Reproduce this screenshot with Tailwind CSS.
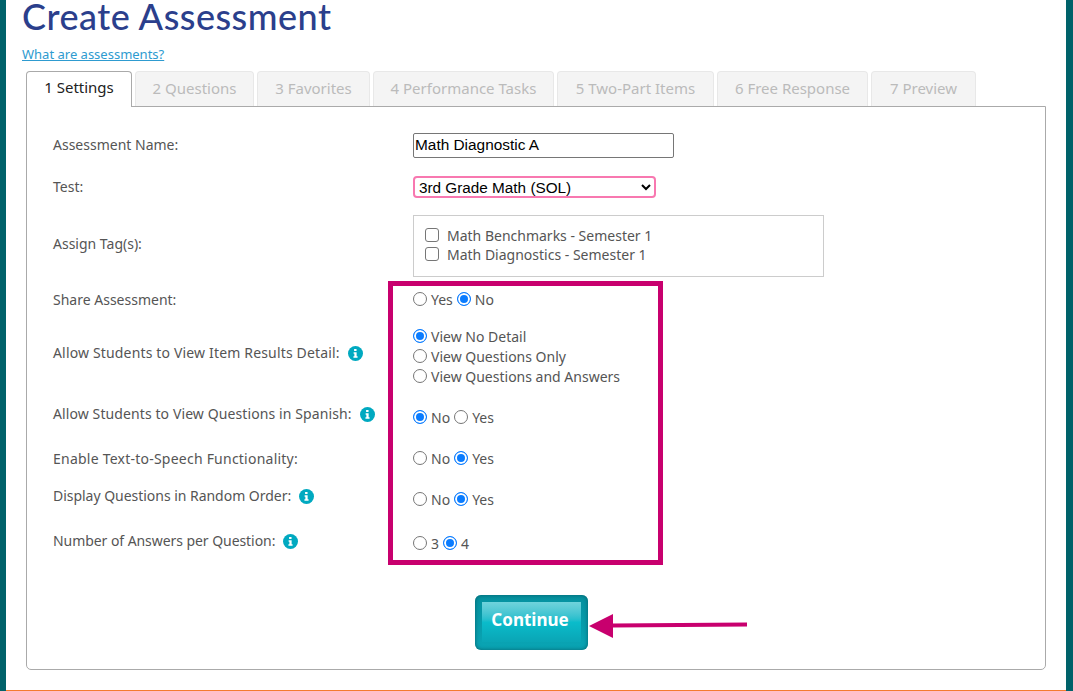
<!DOCTYPE html>
<html lang="en">
<head>
    <meta charset="UTF-8">
    <title>Create Assessment</title>
    <script src="https://cdn.jsdelivr.net/npm/@tailwindcss/browser@4"></script>
</head>
<body class="bg-white h-[691px] overflow-hidden font-['Noto_Sans',sans-serif] text-[14px] leading-[20px] text-[#555]">
    <div class="relative h-[691px] border-l-[6px] border-r-[7px] border-[#00626a]">
        <div class="h-[690px] pl-[16px] pr-[20px]">
            <h1 class="h-[44px] font-['Lato',sans-serif] text-[36px] tracking-[0.5px] leading-[32px] font-medium text-[#2b3f8c]">Create Assessment</h1>
            <a href="#" class="block h-[27px] text-[13px] text-[#2e9bd0] underline">What are assessments?</a>

            <div class="flex pl-[4px] h-[36px] gap-[3px] relative z-10">
                <div class="w-[106px] h-[36px] pb-[5px] flex items-center justify-center bg-white border border-b-0 border-[#aaa] rounded-t-[4px] text-[#222] text-[15px]">1 Settings</div>
                <div class="w-[119px] h-[35px] pb-[3px] flex items-center justify-center bg-[#f4f4f4] border border-b-0 border-[#e8e8e8] rounded-t-[4px] text-[#bbb] text-[15px]">2 Questions</div>
                <div class="w-[113px] h-[35px] pb-[3px] flex items-center justify-center bg-[#f4f4f4] border border-b-0 border-[#e8e8e8] rounded-t-[4px] text-[#bbb] text-[15px]">3 Favorites</div>
                <div class="w-[181px] h-[35px] pb-[3px] flex items-center justify-center bg-[#f4f4f4] border border-b-0 border-[#e8e8e8] rounded-t-[4px] text-[#bbb] text-[15px]">4 Performance Tasks</div>
                <div class="w-[157px] h-[35px] pb-[3px] flex items-center justify-center bg-[#f4f4f4] border border-b-0 border-[#e8e8e8] rounded-t-[4px] text-[#bbb] text-[15px]">5 Two-Part Items</div>
                <div class="w-[151px] h-[35px] pb-[3px] flex items-center justify-center bg-[#f4f4f4] border border-b-0 border-[#e8e8e8] rounded-t-[4px] text-[#bbb] text-[15px]">6 Free Response</div>
                <div class="w-[105px] h-[35px] pb-[3px] flex items-center justify-center bg-[#f4f4f4] border border-b-0 border-[#e8e8e8] rounded-t-[4px] text-[#bbb] text-[15px]">7 Preview</div>
            </div>

            <div class="ml-[4px] -mt-[1px] w-[1020px] h-[564px] border border-[#aaa] rounded-b-[5px] pt-[17px] pl-[26px]">
                <div class="flex items-center h-[42px]">
                    <div class="w-[360px]">Assessment Name:</div>
                    <input type="text" value="Math Diagnostic A" class="w-[261px] h-[25px] px-[1px] border border-[#767676] rounded-[2px] bg-white text-black text-[15.4px] font-['Liberation_Sans',sans-serif]">
                </div>
                <div class="flex items-center h-[42px]">
                    <div class="w-[360px]">Test:</div>
                    <select class="w-[243px] h-[22px] border-2 border-[#f878b0] rounded-[4px] bg-white text-black text-[15.3px] font-['Liberation_Sans',sans-serif]">
                        <option>3rd Grade Math (SOL)</option>
                    </select>
                </div>
                <div class="flex items-center h-[72px]">
                    <div class="w-[360px]">Assign Tag(s):</div>
                    <div class="w-[411px] h-[62px] mt-[4px] border border-[#ccc] pt-[10px] pl-[11px]">
                        <label class="flex items-center h-[19px] gap-[8px]"><input type="checkbox" class="appearance-none w-[14px] h-[14px] -mt-[2px] rounded-[3px] border border-[#767676] bg-white">Math Benchmarks - Semester 1</label>
                        <label class="flex items-center h-[19px] gap-[8px]"><input type="checkbox" class="appearance-none w-[14px] h-[14px] -mt-[2px] rounded-[3px] border border-[#767676] bg-white">Math Diagnostics - Semester 1</label>
                    </div>
                </div>
                <div class="flex items-center h-[40px]">
                    <div class="w-[360px]">Share Assessment:</div>
                    <div class="flex items-center gap-[4px]">
                        <input type="radio" name="share" class="appearance-none w-[14px] h-[14px] -mt-[2px] rounded-full border border-[#767676] bg-white checked:border-[#0a7cff] checked:bg-[#0a7cff] checked:shadow-[inset_0_0_0_2px_white]">Yes
                        <input type="radio" name="share" checked class="appearance-none w-[14px] h-[14px] -mt-[2px] rounded-full border border-[#767676] bg-white checked:border-[#0a7cff] checked:bg-[#0a7cff] checked:shadow-[inset_0_0_0_2px_white]">No
                    </div>
                </div>
                <div class="flex items-start h-[72px]">
                    <div class="w-[360px] mt-[23px] flex items-center gap-[8px]"><span class="tracking-[0.16px]">Allow Students to View Item Results Detail:</span>
                        <svg class="w-[15px] h-[15px]" viewBox="0 0 16 16"><circle cx="8" cy="8" r="8" fill="#00a9c0"/><path d="M6.5 3.2h2.6v2H6.5zM6 6.6h3.2v4.4h1v1.6H5.8V11h1V8.2H6z" fill="#fff"/></svg>
                    </div>
                    <div class="mt-[7px]">
                        <label class="flex items-center h-[20px] gap-[4px]"><input type="radio" name="detail" checked class="appearance-none w-[14px] h-[14px] -mt-[2px] rounded-full border border-[#767676] bg-white checked:border-[#0a7cff] checked:bg-[#0a7cff] checked:shadow-[inset_0_0_0_2px_white]">View No Detail</label>
                        <label class="flex items-center h-[20px] gap-[4px]"><input type="radio" name="detail" class="appearance-none w-[14px] h-[14px] -mt-[2px] rounded-full border border-[#767676] bg-white checked:border-[#0a7cff] checked:bg-[#0a7cff] checked:shadow-[inset_0_0_0_2px_white]">View Questions Only</label>
                        <label class="flex items-center h-[20px] gap-[4px]"><input type="radio" name="detail" class="appearance-none w-[14px] h-[14px] -mt-[2px] rounded-full border border-[#767676] bg-white checked:border-[#0a7cff] checked:bg-[#0a7cff] checked:shadow-[inset_0_0_0_2px_white]">View Questions and Answers</label>
                    </div>
                </div>
                <div class="flex items-start h-[46px]">
                    <div class="w-[360px] mt-[12px] flex items-center gap-[8px]"><span class="tracking-[0.1px]">Allow Students to View Questions in Spanish:</span>
                        <svg class="w-[15px] h-[15px]" viewBox="0 0 16 16"><circle cx="8" cy="8" r="8" fill="#00a9c0"/><path d="M6.5 3.2h2.6v2H6.5zM6 6.6h3.2v4.4h1v1.6H5.8V11h1V8.2H6z" fill="#fff"/></svg>
                    </div>
                    <div class="mt-[16px] flex items-center gap-[4px]">
                        <input type="radio" name="spanish" checked class="appearance-none w-[14px] h-[14px] -mt-[2px] rounded-full border border-[#767676] bg-white checked:border-[#0a7cff] checked:bg-[#0a7cff] checked:shadow-[inset_0_0_0_2px_white]">No
                        <input type="radio" name="spanish" class="appearance-none w-[14px] h-[14px] -mt-[2px] rounded-full border border-[#767676] bg-white checked:border-[#0a7cff] checked:bg-[#0a7cff] checked:shadow-[inset_0_0_0_2px_white]">Yes
                    </div>
                </div>
                <div class="flex items-center h-[42px]">
                    <div class="w-[360px]"><span class="tracking-[0.23px]">Enable Text-to-Speech Functionality:</span></div>
                    <div class="flex items-center gap-[4px]">
                        <input type="radio" name="tts" class="appearance-none w-[14px] h-[14px] -mt-[2px] rounded-full border border-[#767676] bg-white checked:border-[#0a7cff] checked:bg-[#0a7cff] checked:shadow-[inset_0_0_0_2px_white]">No
                        <input type="radio" name="tts" checked class="appearance-none w-[14px] h-[14px] -mt-[2px] rounded-full border border-[#767676] bg-white checked:border-[#0a7cff] checked:bg-[#0a7cff] checked:shadow-[inset_0_0_0_2px_white]">Yes
                    </div>
                </div>
                <div class="flex items-start h-[40px]">
                    <div class="w-[360px] mt-[6px] flex items-center gap-[8px]"><span class="-tracking-[0.03px]">Display Questions in Random Order:</span>
                        <svg class="w-[15px] h-[15px]" viewBox="0 0 16 16"><circle cx="8" cy="8" r="8" fill="#00a9c0"/><path d="M6.5 3.2h2.6v2H6.5zM6 6.6h3.2v4.4h1v1.6H5.8V11h1V8.2H6z" fill="#fff"/></svg>
                    </div>
                    <div class="mt-[10px] flex items-center gap-[4px]">
                        <input type="radio" name="random" class="appearance-none w-[14px] h-[14px] -mt-[2px] rounded-full border border-[#767676] bg-white checked:border-[#0a7cff] checked:bg-[#0a7cff] checked:shadow-[inset_0_0_0_2px_white]">No
                        <input type="radio" name="random" checked class="appearance-none w-[14px] h-[14px] -mt-[2px] rounded-full border border-[#767676] bg-white checked:border-[#0a7cff] checked:bg-[#0a7cff] checked:shadow-[inset_0_0_0_2px_white]">Yes
                    </div>
                </div>
                <div class="flex items-start h-[44px]">
                    <div class="w-[360px] mt-[11px] flex items-center gap-[8px]"><span class="-tracking-[0.06px]">Number of Answers per Question:</span>
                        <svg class="w-[15px] h-[15px]" viewBox="0 0 16 16"><circle cx="8" cy="8" r="8" fill="#00a9c0"/><path d="M6.5 3.2h2.6v2H6.5zM6 6.6h3.2v4.4h1v1.6H5.8V11h1V8.2H6z" fill="#fff"/></svg>
                    </div>
                    <div class="mt-[14px] flex items-center gap-[4px]">
                        <input type="radio" name="answers" class="appearance-none w-[14px] h-[14px] -mt-[2px] rounded-full border border-[#767676] bg-white checked:border-[#0a7cff] checked:bg-[#0a7cff] checked:shadow-[inset_0_0_0_2px_white]">3
                        <input type="radio" name="answers" checked class="appearance-none w-[14px] h-[14px] -mt-[2px] rounded-full border border-[#767676] bg-white checked:border-[#0a7cff] checked:bg-[#0a7cff] checked:shadow-[inset_0_0_0_2px_white]">4
                    </div>
                </div>
                <div class="mt-[31px] ml-[422px] w-[113px] h-[55px] rounded-[6px] bg-gradient-to-b from-[#05919f] to-[#0aa5b5] pt-[7px] px-[7px] shadow-[inset_0_0_4px_#04606b]">
                    <button class="block w-[99px] h-[40px] bg-gradient-to-b from-[#6fd3dc] via-[#0abccb] to-[#0aa5b5] text-white font-bold text-[17px] leading-[36px] pb-[4px] pr-[3px]">Continue</button>
                </div>
            </div>
        </div>
        <div class="absolute left-0 right-0 bottom-0 h-[1px] bg-[#f47b30]"></div>

        <!-- annotations drawn over the form -->
        <div class="absolute left-[382px] top-[281px] w-[275px] h-[284px] border-[5px] border-[#c8006e]"></div>
        <svg class="absolute left-[580px] top-[610px]" width="170" height="32" viewBox="0 0 170 32">
            <path d="M3 16 L27 4 V13.5 L161 12.5 V16.5 L27 17.5 V28 Z" fill="#c8006e"/>
        </svg>
    </div>
</body>
</html>
